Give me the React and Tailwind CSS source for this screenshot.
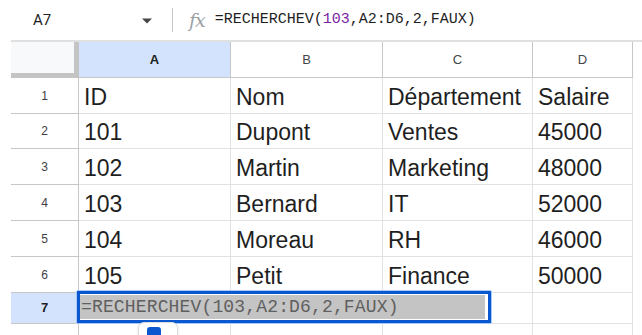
import React from "react";

const columns = [
  { key: "A", width: "w-[152px]", active: true },
  { key: "B", width: "w-[152px]" },
  { key: "C", width: "w-[150px]" },
  { key: "D", width: "w-[100px]" },
];

const rows = [
  ["ID", "Nom", "Département", "Salaire"],
  ["101", "Dupont", "Ventes", "45000"],
  ["102", "Martin", "Marketing", "48000"],
  ["103", "Bernard", "IT", "52000"],
  ["104", "Moreau", "RH", "46000"],
  ["105", "Petit", "Finance", "50000"],
];

const rowHeights = ["h-[36px]", "h-[35px]", "h-[36px]", "h-[36px]", "h-[36px]", "h-[36px]"];

function FormulaBar() {
  return (
    <div className="flex h-[40px] items-center font-['Roboto','Liberation_Sans',sans-serif]">
      <div className="w-[130px] pl-[33px] text-[15px] text-[#1f1f1f]">A7</div>
      <svg width="12" height="6" viewBox="0 0 12 6" className="ml-[11px] mt-[1px]">
        <path d="M1 0.5h10L6 5.5z" fill="#444746" />
      </svg>
      <div className="ml-[19px] h-[24px] w-px bg-[#c7c7c7]" />
      <span className="ml-[16px] font-['DejaVu_Serif','Liberation_Serif',serif] text-[19px] italic text-[#9aa0a6] tracking-[-1px]">
        fx
      </span>
      <span className="ml-[10px] font-['Liberation_Mono',monospace] text-[15px] text-[#1f1f1f]">
        =RECHERCHEV(<span className="text-[#7b1fa2]">103</span>,A2:D6,2,FAUX)
      </span>
    </div>
  );
}

function HeaderRow() {
  return (
    <div className="flex h-[38px] border-t-2 border-[#e0e0e0] font-['Liberation_Sans',Arial,sans-serif] text-[13px]">
      <div className="flex w-[68px] shrink-0 border-b-[5px] border-r-[5px] border-[#c4c4c4] bg-[#f8f9fa]" />
      {columns.map((c) => (
        <div
          key={c.key}
          className={
            c.width +
            " flex shrink-0 items-center justify-center border-b border-r border-[#c7c7c7] " +
            (c.active ? "bg-[#d3e3fd] font-bold text-[#1f1f1f]" : "bg-white text-[#444746]")
          }
        >
          {c.key}
        </div>
      ))}
    </div>
  );
}

function DataRow({ index, cells, height }) {
  return (
    <div className={height + " flex font-['Liberation_Sans',Arial,sans-serif]"}>
      <div className="flex w-[68px] shrink-0 items-center justify-center border-b border-r border-[#c7c7c7] text-[12px] text-[#3c4043]">
        {index}
      </div>
      {columns.map((c, i) => (
        <div
          key={c.key}
          className={
            c.width +
            " flex shrink-0 items-end overflow-hidden border-b border-r border-[#e2e2e2] pb-[3px] pl-[5px] text-[23px] leading-[26px] text-[#1f1f1f] whitespace-nowrap"
          }
        >
          {cells[i]}
        </div>
      ))}
    </div>
  );
}

function ActiveRow() {
  return (
    <div className="relative flex h-[31px] font-['Liberation_Sans',Arial,sans-serif]">
      <div className="flex w-[68px] shrink-0 items-center justify-center border-b border-r border-[#c7c7c7] bg-[#d3e3fd] text-[13px] font-bold text-[#1f1f1f]">
        7
      </div>
      {columns.map((c) => (
        <div key={c.key} className={c.width + " shrink-0 border-b border-r border-[#e2e2e2]"} />
      ))}
      <div className="absolute left-[65px] top-[-3px] h-[34px] w-[416px] rounded-[2px] border border-[#a8c7fa]">
        <div className="flex h-full w-full items-center border-[3px] border-[#0b57d0] bg-white pr-[3px]">
          <div className="flex h-[24px] flex-1 items-center bg-[#c4c4c4] pl-[1px] font-['Liberation_Mono',monospace] text-[18px] tracking-[0.15px] text-[#5f5f5f]">
            =RECHERCHEV(103,A2:D6,2,FAUX)
          </div>
        </div>
      </div>
    </div>
  );
}

function TrailingRow() {
  return (
    <div className="relative flex h-[20px]">
      <div className="w-[68px] shrink-0 border-r border-[#c7c7c7]" />
      {columns.map((c) => (
        <div key={c.key} className={c.width + " shrink-0 border-r border-[#e2e2e2]"} />
      ))}
      <div className="absolute left-[127px] top-[-2px] h-[20px] w-[40px] rounded-t-[6px] border border-[#dadce0] bg-white shadow-sm">
        <div className="ml-[8px] mt-[4px] h-[12px] w-[14px] rounded-t-[3px] bg-[#0b57d0]" />
      </div>
    </div>
  );
}

export default function App() {
  return (
    <div className="h-[335px] w-[642px] overflow-hidden bg-white">
      <FormulaBar />
      <div className="pl-[11px]">
        <HeaderRow />
        {rows.map((cells, i) => (
          <DataRow key={i} index={i + 1} cells={cells} height={rowHeights[i]} />
        ))}
        <ActiveRow />
        <TrailingRow />
      </div>
    </div>
  );
}
